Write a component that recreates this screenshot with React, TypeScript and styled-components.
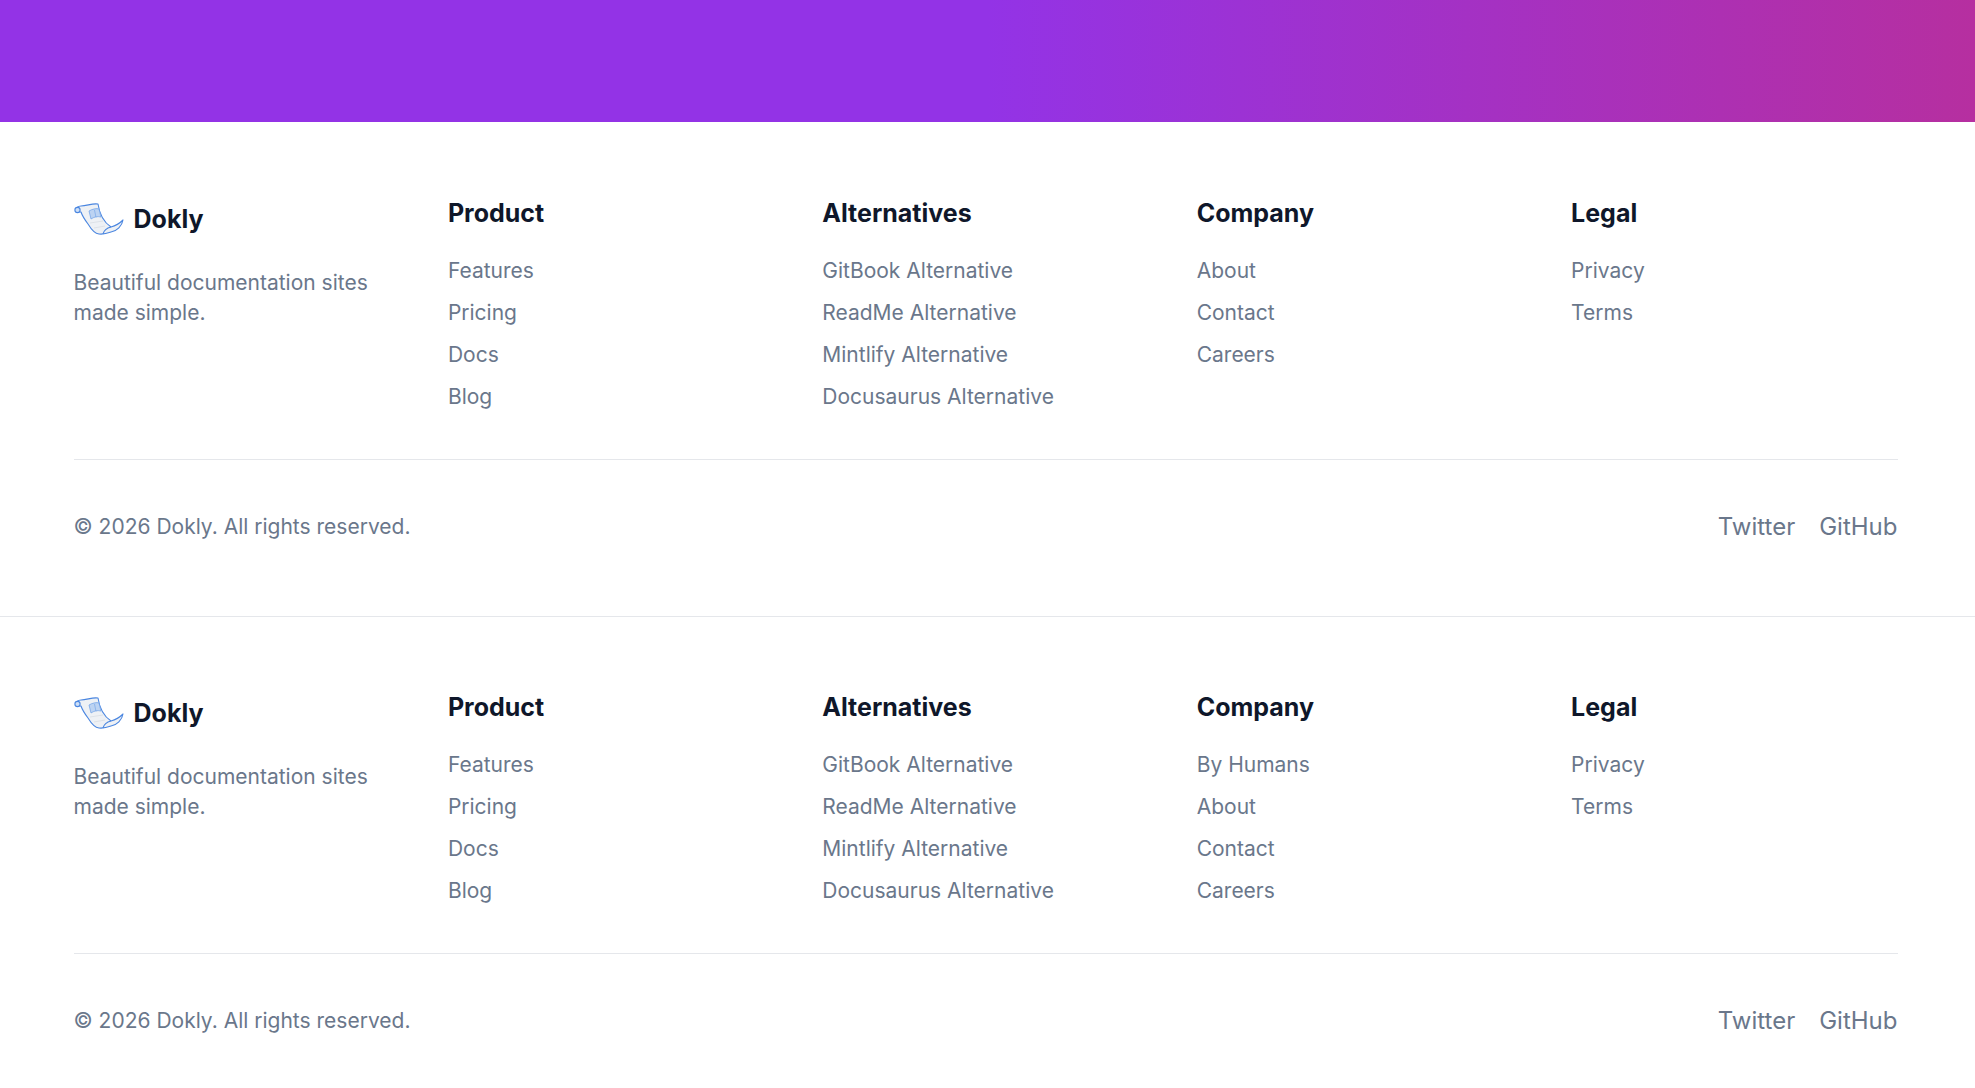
import styled, { createGlobalStyle } from "styled-components"

const GlobalStyle = createGlobalStyle`
    html, body {
        margin: 0;
        padding: 0;
        background: #ffffff;
        font-family: "Inter", "Liberation Sans", sans-serif;
    }
`

const Banner = styled.div`
    height: 122px;
    background: linear-gradient(90deg, #9333e6 0%, #9333e6 50%, #b62fa0 100%);
`

const FooterWrap = styled.footer<{ $bordered?: boolean }>`
    padding: ${(p) => (p.$bordered ? "78px" : "77px")} 77.5px ${(p) => (p.$bordered ? "24px" : "0")} 73.5px;
    border-bottom: ${(p) => (p.$bordered ? "1px solid #e5e7eb" : "none")};
`

const Columns = styled.div`
    display: grid;
    grid-template-columns: repeat(5, 1fr);
    column-gap: 48px;
    padding-bottom: 47px;
    border-bottom: 1px solid #e5e7eb;
`

const Brand = styled.div`
    display: flex;
    flex-direction: column;
`

const LogoRow = styled.div`
    display: flex;
    align-items: center;
    gap: 10px;
    height: 38px;
`

const LogoName = styled.span`
    font-size: 25px;
    font-weight: 700;
    color: #0f172a;
`

const Tagline = styled.p`
    margin: 30px 0 0;
    font-size: 21px;
    line-height: 30px;
    color: #6a778b;
`

const Heading = styled.h3`
    margin: 0 0 30px;
    font-size: 25px;
    line-height: 26px;
    font-weight: 700;
    color: #0f172a;
`

const LinkList = styled.ul`
    list-style: none;
    margin: 0;
    padding: 0;
    display: flex;
    flex-direction: column;
    gap: 12px;
`

const LinkItem = styled.li`
    font-size: 21px;
    line-height: 30px;
    color: #6a778b;
`

const BottomRow = styled.div`
    display: flex;
    justify-content: space-between;
    align-items: center;
    height: 132px;
`

const Copyright = styled.span`
    font-size: 21px;
    color: #6a778b;
`

const Socials = styled.div`
    display: flex;
    gap: 24px;
    font-size: 24px;
    color: #6a778b;
`

function Logo() {
    return (
        <svg width="50" height="38" viewBox="13 10 50 38" fill="none" stroke="#4a86e0" strokeWidth="1.1" strokeLinejoin="round">
            <path d="M15 22 C14 18 17 16 20 16 C26 16 31 13 37 14 C38 21 41 31 50 37 C54 36 59 33 62 30 C61 36 56 41 50 42 C46 43.5 42 44.5 38 44 C33 43.5 30 39 27 34 C24 30 21 25 20 22 Z" fill="#eef1f5" />
            <circle cx="16.5" cy="20" r="2.6" fill="#cfe0f7" />
            <path d="M28 21 C31 19 36 18 38 19 L40 27 C36 26 33 27 30 29 Z" fill="#bcd3f2" stroke="#6b9fe6" strokeWidth="0.7" />
            <path d="M33.5 20 L35 27.5" stroke="#6b9fe6" strokeWidth="0.6" />
            <path d="M29 33 L42 31 M33 38 L44 36" stroke="#d6dbe3" strokeWidth="0.7" />
            <path d="M42 44 C43 40 46 38 50 37" />
        </svg>
    )
}

type Column = { title: string; links: string[] }

function Footer({ columns, bordered }: { columns: Column[]; bordered?: boolean }) {
    return (
        <FooterWrap $bordered={bordered}>
            <Columns>
                <Brand>
                    <LogoRow>
                        <Logo />
                        <LogoName>Dokly</LogoName>
                    </LogoRow>
                    <Tagline>Beautiful documentation sites made simple.</Tagline>
                </Brand>
                {columns.map((col) => (
                    <div key={col.title}>
                        <Heading>{col.title}</Heading>
                        <LinkList>
                            {col.links.map((l) => (
                                <LinkItem key={l}>{l}</LinkItem>
                            ))}
                        </LinkList>
                    </div>
                ))}
            </Columns>
            <BottomRow>
                <Copyright>© 2026 Dokly. All rights reserved.</Copyright>
                <Socials>
                    <span>Twitter</span>
                    <span>GitHub</span>
                </Socials>
            </BottomRow>
        </FooterWrap>
    )
}

const product = { title: "Product", links: ["Features", "Pricing", "Docs", "Blog"] }
const alternatives = {
    title: "Alternatives",
    links: ["GitBook Alternative", "ReadMe Alternative", "Mintlify Alternative", "Docusaurus Alternative"],
}
const legal = { title: "Legal", links: ["Privacy", "Terms"] }

export default function App() {
    return (
        <>
            <GlobalStyle />
            <Banner />
            <Footer
                bordered
                columns={[product, alternatives, { title: "Company", links: ["About", "Contact", "Careers"] }, legal]}
            />
            <Footer
                columns={[product, alternatives, { title: "Company", links: ["By Humans", "About", "Contact", "Careers"] }, legal]}
            />
        </>
    )
}
